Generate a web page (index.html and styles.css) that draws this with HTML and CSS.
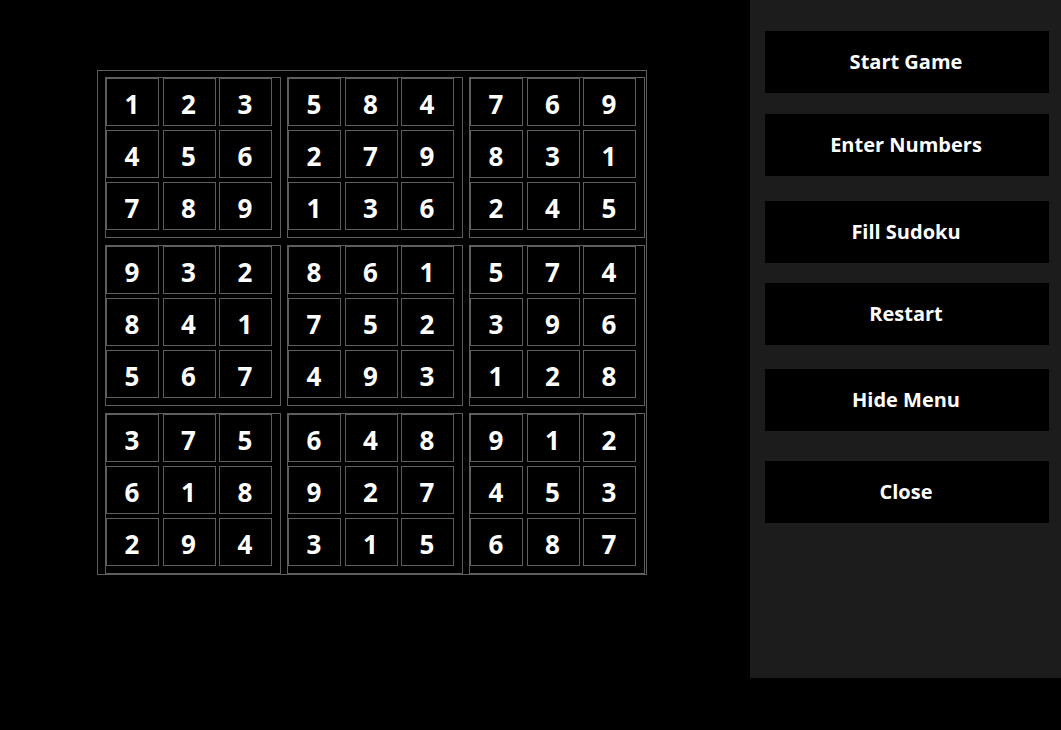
FILE: index.html
```html
<!DOCTYPE html>
<html>
<head>
<meta charset="utf-8">
<link rel="stylesheet" href="styles.css">
</head>
<body>
<main class="stage">
  <div class="board">
    <div class="block"><div class="cell">1</div><div class="cell">2</div><div class="cell">3</div><div class="cell">4</div><div class="cell">5</div><div class="cell">6</div><div class="cell">7</div><div class="cell">8</div><div class="cell">9</div></div>
    <div class="block"><div class="cell">5</div><div class="cell">8</div><div class="cell">4</div><div class="cell">2</div><div class="cell">7</div><div class="cell">9</div><div class="cell">1</div><div class="cell">3</div><div class="cell">6</div></div>
    <div class="block"><div class="cell">7</div><div class="cell">6</div><div class="cell">9</div><div class="cell">8</div><div class="cell">3</div><div class="cell">1</div><div class="cell">2</div><div class="cell">4</div><div class="cell">5</div></div>
    <div class="block"><div class="cell">9</div><div class="cell">3</div><div class="cell">2</div><div class="cell">8</div><div class="cell">4</div><div class="cell">1</div><div class="cell">5</div><div class="cell">6</div><div class="cell">7</div></div>
    <div class="block"><div class="cell">8</div><div class="cell">6</div><div class="cell">1</div><div class="cell">7</div><div class="cell">5</div><div class="cell">2</div><div class="cell">4</div><div class="cell">9</div><div class="cell">3</div></div>
    <div class="block"><div class="cell">5</div><div class="cell">7</div><div class="cell">4</div><div class="cell">3</div><div class="cell">9</div><div class="cell">6</div><div class="cell">1</div><div class="cell">2</div><div class="cell">8</div></div>
    <div class="block"><div class="cell">3</div><div class="cell">7</div><div class="cell">5</div><div class="cell">6</div><div class="cell">1</div><div class="cell">8</div><div class="cell">2</div><div class="cell">9</div><div class="cell">4</div></div>
    <div class="block"><div class="cell">6</div><div class="cell">4</div><div class="cell">8</div><div class="cell">9</div><div class="cell">2</div><div class="cell">7</div><div class="cell">3</div><div class="cell">1</div><div class="cell">5</div></div>
    <div class="block"><div class="cell">9</div><div class="cell">1</div><div class="cell">2</div><div class="cell">4</div><div class="cell">5</div><div class="cell">3</div><div class="cell">6</div><div class="cell">8</div><div class="cell">7</div></div>
  </div>
</main>
<aside class="menu">
  <button class="btn btn-start">Start Game</button>
  <button class="btn btn-enter">Enter Numbers</button>
  <button class="btn btn-fill">Fill Sudoku</button>
  <button class="btn btn-restart">Restart</button>
  <button class="btn btn-hide">Hide Menu</button>
  <button class="btn btn-close">Close</button>
</aside>
</body>
</html>
```

FILE: styles.css
```css
html, body {
  margin: 0;
  padding: 0;
  background: #000;
  width: 1061px;
  height: 730px;
  overflow: hidden;
}

body {
  display: flex;
  align-items: flex-start;
  font-family: "Open Sans", "Noto Sans", sans-serif;
  color: #fff;
}

.stage {
  width: 750px;
  height: 730px;
  padding: 70px 0 0 97px;
  box-sizing: border-box;
}

.board {
  width: 550px;
  height: 505px;
  box-sizing: border-box;
  border: 1px solid #5e5e5e;
  padding: 6px 1px 0 7px;
  display: grid;
  grid-template-columns: repeat(3, 176px);
  grid-template-rows: repeat(3, 161px);
  column-gap: 6px;
  row-gap: 7px;
}

.block {
  box-sizing: border-box;
  border: 1px solid #5e5e5e;
  padding: 0 8px 7px 0;
  display: grid;
  grid-template-columns: repeat(3, 53px);
  grid-template-rows: repeat(3, 48px);
  column-gap: 3.5px;
  row-gap: 4px;
}

.cell {
  box-sizing: border-box;
  border: 1px solid #5e5e5e;
  display: flex;
  align-items: center;
  justify-content: center;
  padding-top: 4px;
  padding-right: 1px;
  font-weight: 700;
  font-size: 26px;
  line-height: 1;
}

.menu {
  width: 311px;
  height: 678px;
  background: #1c1c1c;
  box-sizing: border-box;
  padding: 31px 12px 0 15px;
  display: flex;
  flex-direction: column;
}

.btn {
  height: 62px;
  width: 284px;
  flex: none;
  border: none;
  background: #000;
  color: #fff;
  font-family: "Open Sans", "Noto Sans", sans-serif;
  font-weight: 700;
  font-size: 20px;
  padding: 0 2px 2px 0;
  margin: 0;
}

.btn-enter { margin-top: 21px; }
.btn-fill { margin-top: 25px; }
.btn-restart { margin-top: 20px; }
.btn-hide { margin-top: 24px; }
.btn-close { margin-top: 30px; }
```
